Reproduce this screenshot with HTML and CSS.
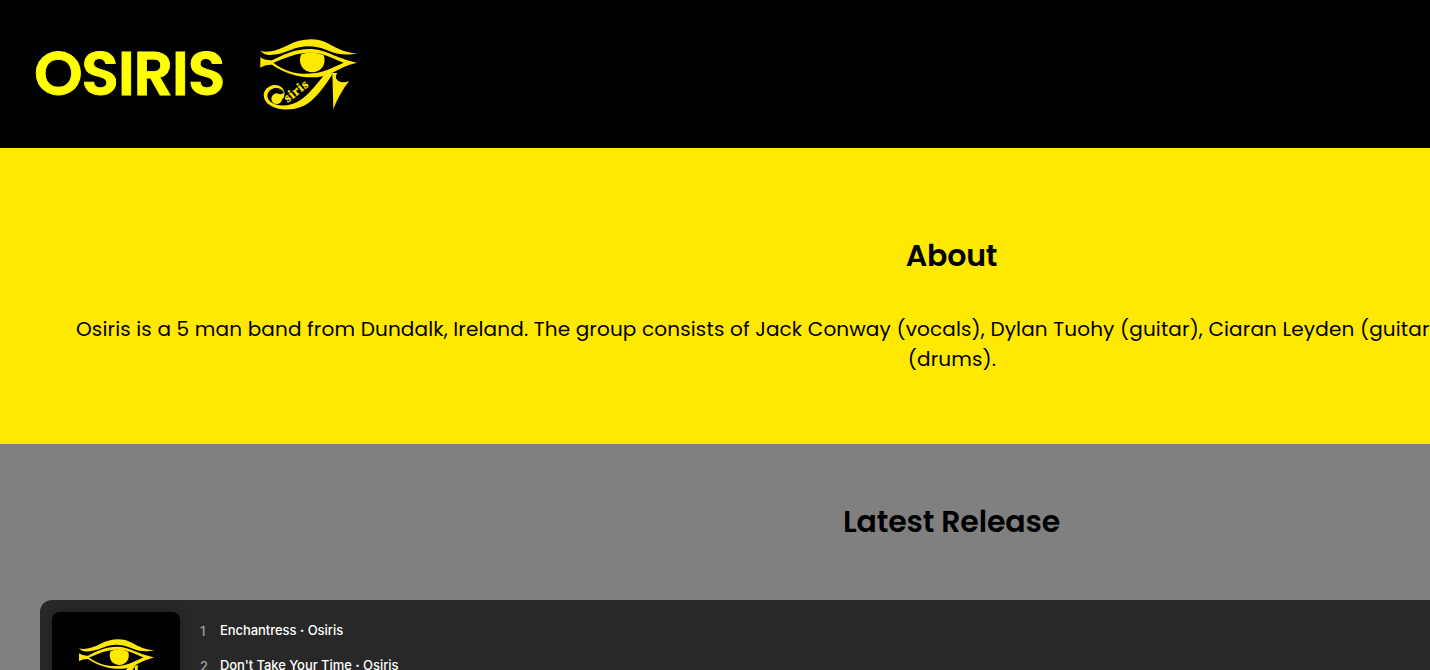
FILE: index.html
```html
<!DOCTYPE html>
<html lang="en">
<head>
<meta charset="utf-8">
<title>Osiris</title>
<link rel="stylesheet" href="styles.css">
</head>
<body>
<svg class="defs" width="0" height="0" aria-hidden="true">
  <symbol id="eye" viewBox="0 0 360 270">
    <path d="M30 62C52 70 80 62 115 45C152 25 200 21 236 41C266 57 287 69 324 70C287 78 260 73 230 60C192 45 158 45 122 60C88 74 58 79 42 71Z"/>
    <path fill-rule="evenodd" d="M31 82Q44 92 66 91C100 74 135 57 180 57C225 57 255 84 321 98C290 105 265 118 240 132C195 152 120 142 66 104Q45 103 31 113ZM70 98C105 126 150 135 190 130C225 127 255 108 281 98C250 87 225 68 180 68C135 68 105 85 70 98Z"/>
    <path d="M154 73Q187 60 221 76A37 37 0 1 1 154 73Z"/>
    <path d="M222 136L250 128C222 172 193 212 160 228C126 243 84 242 60 226C36 209 35 183 57 170C78 158 102 169 103 189C94 172 75 170 62 179C47 191 50 209 66 218C88 232 125 228 153 209C181 190 203 158 222 136Z"/>
    <circle cx="80" cy="206" r="16"/>
    <path d="M86 193Q101 194 103 184Q106 202 92 214Z"/>
    <path d="M247 129H262Q253 140 262 151Q273 161 297 154C276 181 260 210 250 238Z"/>
    <text class="eye-text" transform="translate(113 218) rotate(-38)">siris</text>
  </symbol>
</svg>
<div class="page">
  <header class="header">
    <h1 class="brand">OSIRIS</h1>
    <svg class="logo"><use href="#eye"/></svg>
  </header>
  <section class="about">
    <h2 class="heading about-heading">About</h2>
    <p class="bio">Osiris is a 5 man band from Dundalk, Ireland. The group consists of Jack Conway (vocals), Dylan Tuohy (guitar), Ciaran Leyden (guitar)</p>
    <p class="bio bio-end">(drums).</p>
  </section>
  <section class="release">
    <h2 class="heading release-heading">Latest Release</h2>
    <div class="player">
      <div class="cover"><svg class="cover-logo"><use href="#eye"/></svg></div>
      <ol class="tracks">
        <li class="track"><span class="num">1</span><span class="title">Enchantress <span class="dot">·</span> Osiris</span></li>
        <li class="track"><span class="num">2</span><span class="title">Don't Take Your Time <span class="dot">·</span> Osiris</span></li>
      </ol>
    </div>
  </section>
</div>
</body>
</html>
```
FILE: styles.css
```css
* { box-sizing: border-box; }
html { overflow: hidden; }
body { margin: 0; height: 670px; overflow: hidden; font-family: Poppins, Inter, sans-serif; color: #000; background: #808080; }
h1, h2, p, ol { margin: 0; padding: 0; }
.defs { position: absolute; }
.page { width: 1904px; }
.header { height: 148px; background: #000; display: flex; align-items: flex-start; padding-left: 34px; }
.brand { width: 216px; padding-top: 29px; font-size: 62px; line-height: 90px; font-weight: 600; color: #ff0; letter-spacing: -1.4px; white-space: nowrap; -webkit-text-stroke: 0.8px #ff0; }
.logo { width: 120px; height: 90px; margin-top: 30px; fill: #ffe900; }
.eye-text { font: bold 40px "Liberation Serif", serif; letter-spacing: 2.5px; stroke: #ffe900; stroke-width: 1px; }
.about { height: 296px; background: #ffe900; padding-top: 85px; }
.heading { font-size: 30px; line-height: 46px; font-weight: 600; text-align: center; letter-spacing: -0.15px; text-indent: -1px; }
.bio { font-size: 20px; line-height: 30px; padding-left: 76px; white-space: nowrap; letter-spacing: 0.15px; }
.about-heading { margin-bottom: 35px; }
.bio-end { padding-left: 0; text-align: center; }
.release { padding: 55px 40px 0; background: #808080; height: 226px; }
.player { margin-top: 55px; height: 152px; padding: 12px; background: #282828; border-radius: 12px; display: flex; }
.cover { width: 128px; height: 128px; background: #000; border-radius: 8px; padding: 20px 0 0 19px; box-shadow: 0 0 10px rgba(0, 0, 0, .2); }
.cover-logo { display: block; width: 93px; height: 70px; fill: #ffe900; }
.tracks { list-style: none; padding: 0 0 0 20px; color: #fff; font-family: Inter, sans-serif; }
.track { height: 35px; display: flex; align-items: center; font-size: 13px; font-weight: 500; }
.title { letter-spacing: -0.06px; }
.dot { font-weight: 800; }
.num { width: 20px; color: #a0a0a0; font-weight: 500; padding: 2px 0 0 0; }
```
